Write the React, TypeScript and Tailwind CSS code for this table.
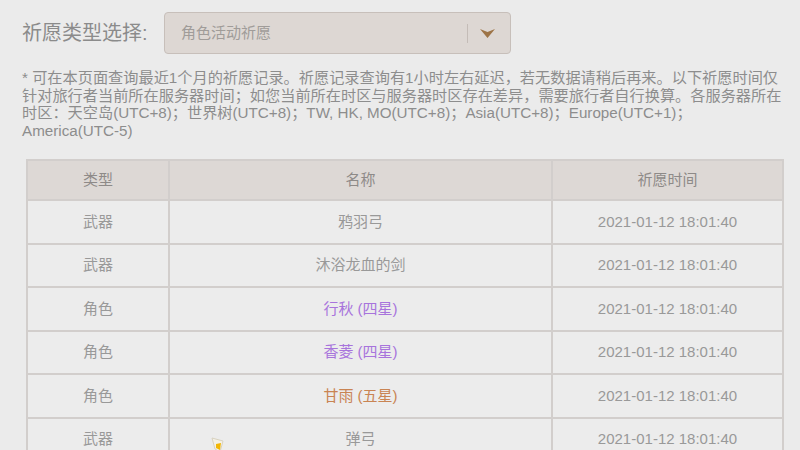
import React from "react";

type Wish = {
  type: string;
  name: string;
  time: string;
  tone?: "purple" | "gold";
};

const wishes: Wish[] = [
  { type: "武器", name: "鸦羽弓", time: "2021-01-12 18:01:40" },
  { type: "武器", name: "沐浴龙血的剑", time: "2021-01-12 18:01:40" },
  { type: "角色", name: "行秋 (四星)", time: "2021-01-12 18:01:40", tone: "purple" },
  { type: "角色", name: "香菱 (四星)", time: "2021-01-12 18:01:40", tone: "purple" },
  { type: "角色", name: "甘雨 (五星)", time: "2021-01-12 18:01:40", tone: "gold" },
  { type: "武器", name: "弹弓", time: "2021-01-12 18:01:40" },
];

const toneClass = {
  purple: "text-[#a874dc]",
  gold: "text-[#c98453]",
};

const noteLines = [
  "* 可在本页面查询最近1个月的祈愿记录。祈愿记录查询有1小时左右延迟，若无数据请稍后再来。以下祈愿时间仅",
  "针对旅行者当前所在服务器时间；如您当前所在时区与服务器时区存在差异，需要旅行者自行换算。各服务器所在",
  "时区：天空岛(UTC+8)；世界树(UTC+8)；TW, HK, MO(UTC+8)；Asia(UTC+8)；Europe(UTC+1)；",
  "America(UTC-5)",
];

function Cursor() {
  return (
    <svg
      className="pointer-events-none absolute left-[211px] top-[437px]"
      width="16"
      height="16"
      viewBox="0 0 16 16"
      aria-hidden="true"
    >
      <path d="M1 1 L12 4 L9 15 L4 12 Z" fill="#f4f1e6" stroke="#d8d2c0" strokeWidth="1" />
      <path d="M5 7 L10 6 L9 13 L5 11 Z" fill="#f2b705" />
    </svg>
  );
}

export default function App() {
  return (
    <div className="relative h-[450px] w-[800px] overflow-hidden bg-[#ebebeb] font-['Liberation_Sans','Noto_Sans_CJK_SC',sans-serif] text-[#8e8e8e]">
      <div className="flex items-center pl-[22px] pt-[12px]">
        <span className="w-[142px] text-[20px] leading-none text-[#8b8b8b]">祈愿类型选择:</span>
        <div className="flex h-[42px] w-[347px] items-center rounded-[4px] border border-[#c7bfba] bg-[#ddd7d3] pl-4 pr-[15px]">
          <span className="flex-1 text-[15px] text-[#a09c99]">角色活动祈愿</span>
          <span className="mr-[12px] h-[19px] w-px bg-[#c4bcb7]" />
          <svg width="15" height="9" viewBox="0 0 15 9" aria-hidden="true">
            <path d="M0 0 L7.5 3 L15 0 L7.5 9 Z" fill="#9d7447" />
          </svg>
        </div>
      </div>

      <p className="mt-[15px] pl-[22px] text-[15.2px] leading-[17.5px] whitespace-nowrap text-[#8d8d8d]">
        {noteLines.map((line, i) => (
          <span key={i} className="block">
            {line}
          </span>
        ))}
      </p>

      <table className="ml-[26px] mt-[20px] w-[758px] table-fixed border-collapse border-2 border-[#d2cecc] text-center text-[15px]">
        <colgroup>
          <col className="w-[142px]" />
          <col className="w-[383px]" />
          <col />
        </colgroup>
        <thead>
          <tr className="h-[40px] bg-[#ddd8d5] text-[#8e8a88]">
            <th className="border-2 border-[#d2cecc] font-normal">类型</th>
            <th className="border-2 border-[#d2cecc] font-normal">名称</th>
            <th className="border-2 border-[#d2cecc] font-normal">祈愿时间</th>
          </tr>
        </thead>
        <tbody>
          {wishes.map((wish, i) => (
            <tr key={i} className="h-[43.5px] bg-[#ececec] text-[#999999]">
              <td className="border-2 border-[#d2cecc]">{wish.type}</td>
              <td className={`border-2 border-[#d2cecc] ${wish.tone ? toneClass[wish.tone] : ""}`}>{wish.name}</td>
              <td className="border-2 border-[#d2cecc]">{wish.time}</td>
            </tr>
          ))}
        </tbody>
      </table>

      <Cursor />
    </div>
  );
}
